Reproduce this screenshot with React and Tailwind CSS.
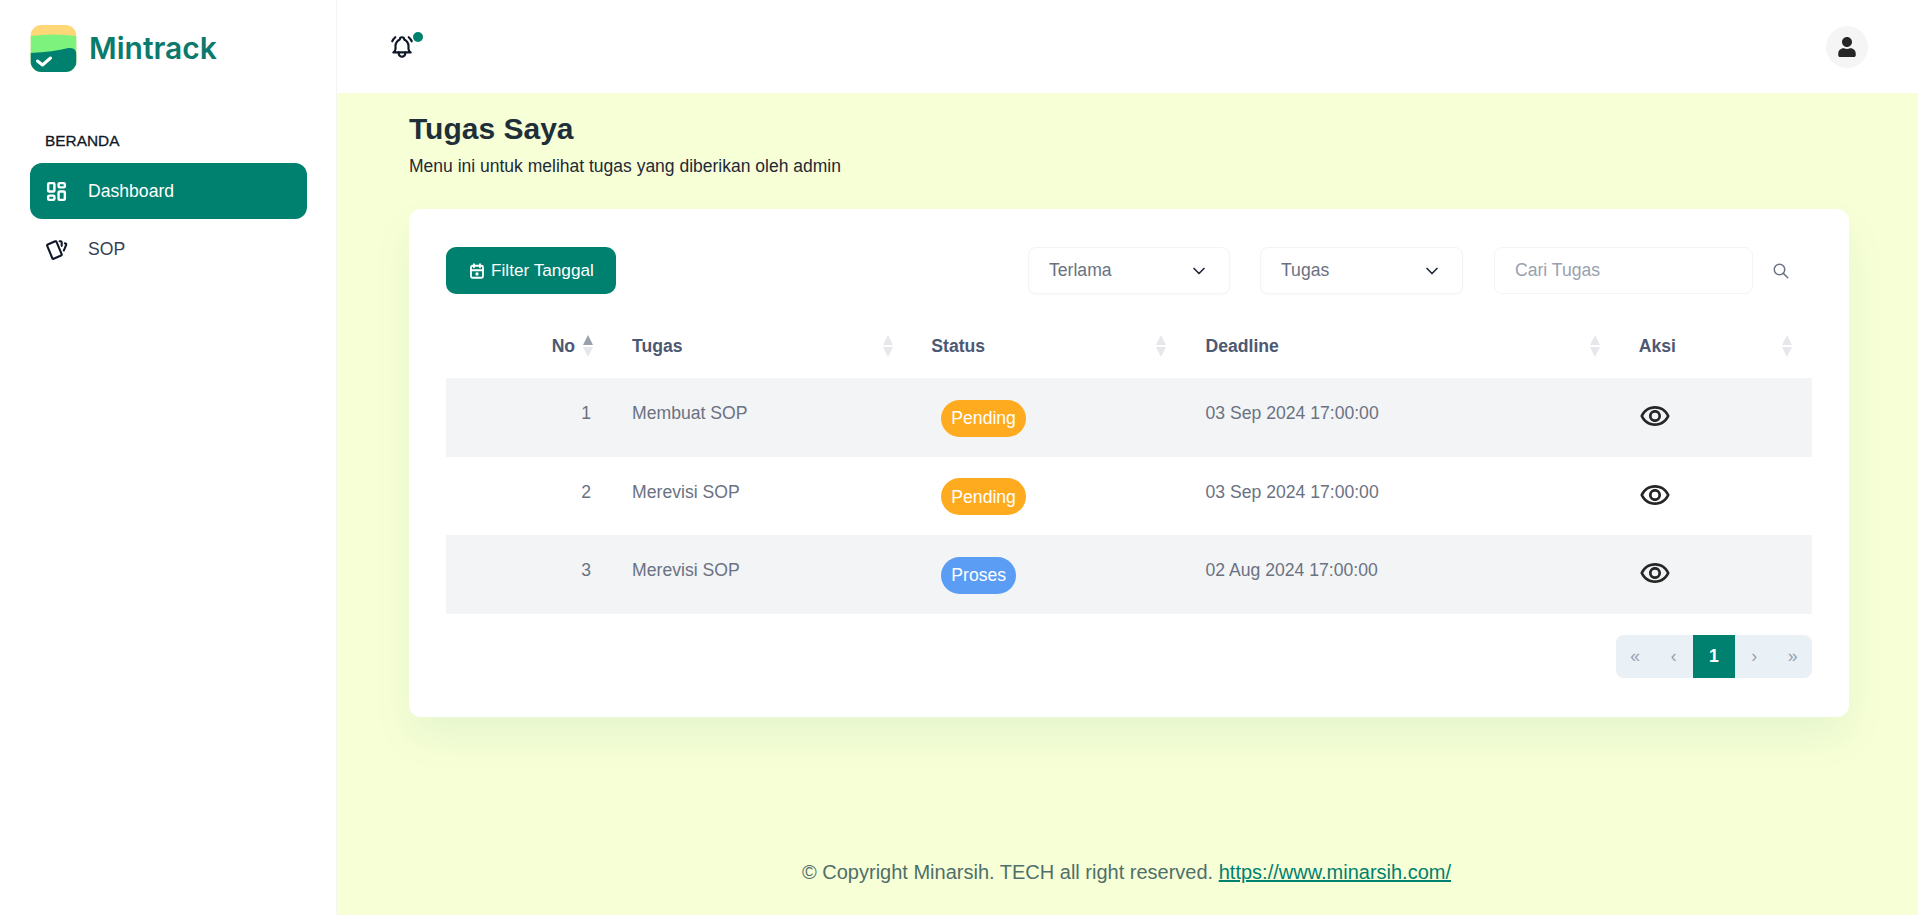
import React from "react";
import {
  TbBellRinging,
  TbCalendarDue,
  TbCards,
  TbChevronDown,
  TbLayoutDashboard,
  TbSearch,
} from "react-icons/tb";
import { FaUser } from "react-icons/fa";
import { MdOutlineRemoveRedEye } from "react-icons/md";

const rows = [
  { no: 1, task: "Membuat SOP", status: "Pending", deadline: "03 Sep 2024 17:00:00" },
  { no: 2, task: "Merevisi SOP", status: "Pending", deadline: "03 Sep 2024 17:00:00" },
  { no: 3, task: "Merevisi SOP", status: "Proses", deadline: "02 Aug 2024 17:00:00" },
];

function Logo() {
  return (
    <svg width="47" height="47" viewBox="0 0 46 47">
      <defs>
        <clipPath id="logo-clip">
          <rect width="46" height="47" rx="11" />
        </clipPath>
      </defs>
      <g clipPath="url(#logo-clip)">
        <rect width="46" height="47" fill="#ffd777" />
        <path d="M0 11 Q23 8 46 11 V47 H0 Z" fill="#7df27d" />
        <path d="M0 28 Q23 27 38 23 Q46 22 46 30 V47 H0 Z" fill="#00806f" />
      </g>
      <path d="M7 36 L12 40 L20 33" fill="none" stroke="#fff" strokeWidth="3" strokeLinecap="round" strokeLinejoin="round" />
    </svg>
  );
}

function SortArrows({ active }) {
  return (
    <span className="flex flex-col items-center gap-[2px]">
      <span className={`w-0 h-0 border-x-[5px] border-x-transparent border-b-[10px] ${active ? "border-b-gray-400" : "border-b-gray-200"}`} />
      <span className="w-0 h-0 border-x-[5px] border-x-transparent border-t-[10px] border-t-gray-200" />
    </span>
  );
}

function Select({ label, width }) {
  return (
    <div className={`flex items-center justify-between h-[47px] pl-5 pr-5 rounded-lg border border-gray-100 bg-white text-[17.6px] text-gray-500 shadow-[0_1px_2px_rgba(0,0,0,0.03)] ${width}`}>
      <span>{label}</span>
      <TbChevronDown className="text-gray-800" size={20} />
    </div>
  );
}

function PageButton({ children, active }) {
  return (
    <div
      className={
        active
          ? "flex items-center justify-center w-[42px] h-full bg-[#00806f] text-white font-bold text-[17.6px]"
          : "flex items-center justify-center w-[38.5px] h-full text-gray-400 text-[17.6px]"
      }
    >
      {children}
    </div>
  );
}

function Header({ label, arrows = true, right, active }) {
  return (
    <div className={`flex items-center ${right ? "justify-end gap-[8px]" : "justify-between"} font-bold text-[17.6px] text-[#4d5873]`}>
      <span>{label}</span>
      {arrows && <SortArrows active={active} />}
    </div>
  );
}

export default function App() {
  return (
    <div className="flex h-screen overflow-hidden bg-[#f7ffd6] font-['Liberation_Sans',Arial,sans-serif] text-[#1f2937]">
      {/* Sidebar */}
      <aside className="w-[337px] shrink-0 bg-white border-r border-gray-100 pl-[30px] pr-[29px] pt-[25px]">
        <div className="flex items-center gap-[12px]">
          <Logo />
          <span className="font-['Inter',sans-serif] font-semibold text-[30px] leading-none text-[#0b7a6c] -mt-[2px]">Mintrack</span>
        </div>
        <p className="mt-[59px] pl-[15px] text-[15.4px] leading-5 text-gray-900 [-webkit-text-stroke:0.3px]">BERANDA</p>
        <nav className="mt-[12px] flex flex-col gap-[2px]">
          <a className="flex items-center h-[56px] pl-[14px] gap-[19px] rounded-xl bg-[#00806f] text-white text-[17.6px]">
            <TbLayoutDashboard size={25} strokeWidth={2.3} />
            Dashboard
          </a>
          <a className="flex items-center h-[56px] pl-[14px] gap-[19px] rounded-xl text-gray-700 text-[17.6px]">
            <TbCards size={25} className="text-gray-900" />
            SOP
          </a>
        </nav>
      </aside>

      <div className="flex-1 flex flex-col min-w-0">
        {/* Top bar */}
        <header className="flex items-center justify-between h-[93px] shrink-0 bg-white pl-[52px] pr-[50px]">
          <div className="relative mt-[1px]">
            <TbBellRinging size={26} className="text-gray-900" />
            <span className="absolute -top-[2px] -right-[8px] w-[10px] h-[10px] rounded-full bg-[#00806f]" />
          </div>
          <div className="flex items-center justify-center w-[42px] h-[42px] rounded-full bg-neutral-100">
            <FaUser size={20} className="text-neutral-800" />
          </div>
        </header>

        {/* Content */}
        <main className="flex-1 flex flex-col pl-[72px] pr-[69px]">
          <h1 className="mt-[16px] text-[30px] font-bold leading-[40px] text-[#1f2f3a]">Tugas Saya</h1>
          <p className="mt-[5px] text-[17.5px] leading-6 text-[#1f2937]">Menu ini untuk melihat tugas yang diberikan oleh admin</p>

          <section className="mt-[31px] rounded-xl bg-white pt-[38px] px-[37px] pb-[39px] shadow-[0_20px_40px_rgba(0,128,111,0.07)]">
            <div className="flex items-center justify-between">
              <button className="flex items-center gap-[5px] h-[47px] px-[22px] rounded-[10px] bg-[#00806f] text-white text-[17.2px]">
                <TbCalendarDue size={18} strokeWidth={2.4} />
                Filter Tanggal
              </button>
              <div className="flex items-center">
                <Select label="Terlama" width="w-[202px]" />
                <div className="w-[30px]" />
                <Select label="Tugas" width="w-[203px]" />
                <input
                  placeholder="Cari Tugas"
                  className="ml-[31px] w-[259px] h-[47px] pl-5 rounded-lg border border-gray-100 bg-white text-[17.6px] placeholder:text-gray-400 outline-none"
                />
                <TbSearch size={18} className="ml-[19px] mr-[22px] text-gray-500" />
              </div>
            </div>

            <table className="mt-[20px] w-full table-fixed border-collapse">
              <colgroup>
                <col className="w-[170px]" />
                <col className="w-[299px]" />
                <col className="w-[274px]" />
                <col className="w-[433px]" />
                <col className="w-[189px]" />
              </colgroup>
              <thead>
                <tr className="h-[64px]">
                  <th className="pr-[23px]"><Header label="No" right active /></th>
                  <th className="pl-[16px] pr-[22px] text-left"><Header label="Tugas" /></th>
                  <th className="pl-[16px] pr-[24px] text-left"><Header label="Status" /></th>
                  <th className="pl-[16px] pr-[23px] text-left"><Header label="Deadline" /></th>
                  <th className="pl-[16px] pr-[20px] text-left"><Header label="Aksi" /></th>
                </tr>
              </thead>
              <tbody>
                {rows.map((r, i) => (
                  <tr key={r.no} className={`h-[78.5px] text-[17.6px] text-gray-500 ${i % 2 === 0 ? "bg-gray-100" : ""}`}>
                    <td className="pr-[25px] text-right align-top pt-[22px]">{r.no}</td>
                    <td className="pl-[16px] align-top pt-[22px]">{r.task}</td>
                    <td className="pl-[26px] pt-[2px] align-middle">
                      <span className={`inline-flex items-center h-[37px] px-[10px] rounded-full text-white ${r.status === "Pending" ? "bg-[#ffab1f]" : "bg-[#5b9df5]"}`}>
                        {r.status}
                      </span>
                    </td>
                    <td className="pl-[16px] align-top pt-[22px]">{r.deadline}</td>
                    <td className="pl-[16px] align-middle">
                      <MdOutlineRemoveRedEye size={32} className="text-neutral-800 -mt-[2px]" />
                    </td>
                  </tr>
                ))}
              </tbody>
            </table>

            <div className="mt-[21px] flex justify-end">
              <div className="flex h-[43px] rounded-lg overflow-hidden bg-[#e9f0f6]">
                <PageButton>«</PageButton>
                <PageButton>‹</PageButton>
                <PageButton active>1</PageButton>
                <PageButton>›</PageButton>
                <PageButton>»</PageButton>
              </div>
            </div>
          </section>

          <footer className="mt-auto pb-[29px] pr-[5px] text-center text-[20px] leading-[28px] text-[#4f6f6b]">
            © Copyright Minarsih. TECH all right reserved.{" "}
            <a className="text-[#00806f] underline">https://www.minarsih.com/</a>
          </footer>
        </main>
      </div>
    </div>
  );
}
